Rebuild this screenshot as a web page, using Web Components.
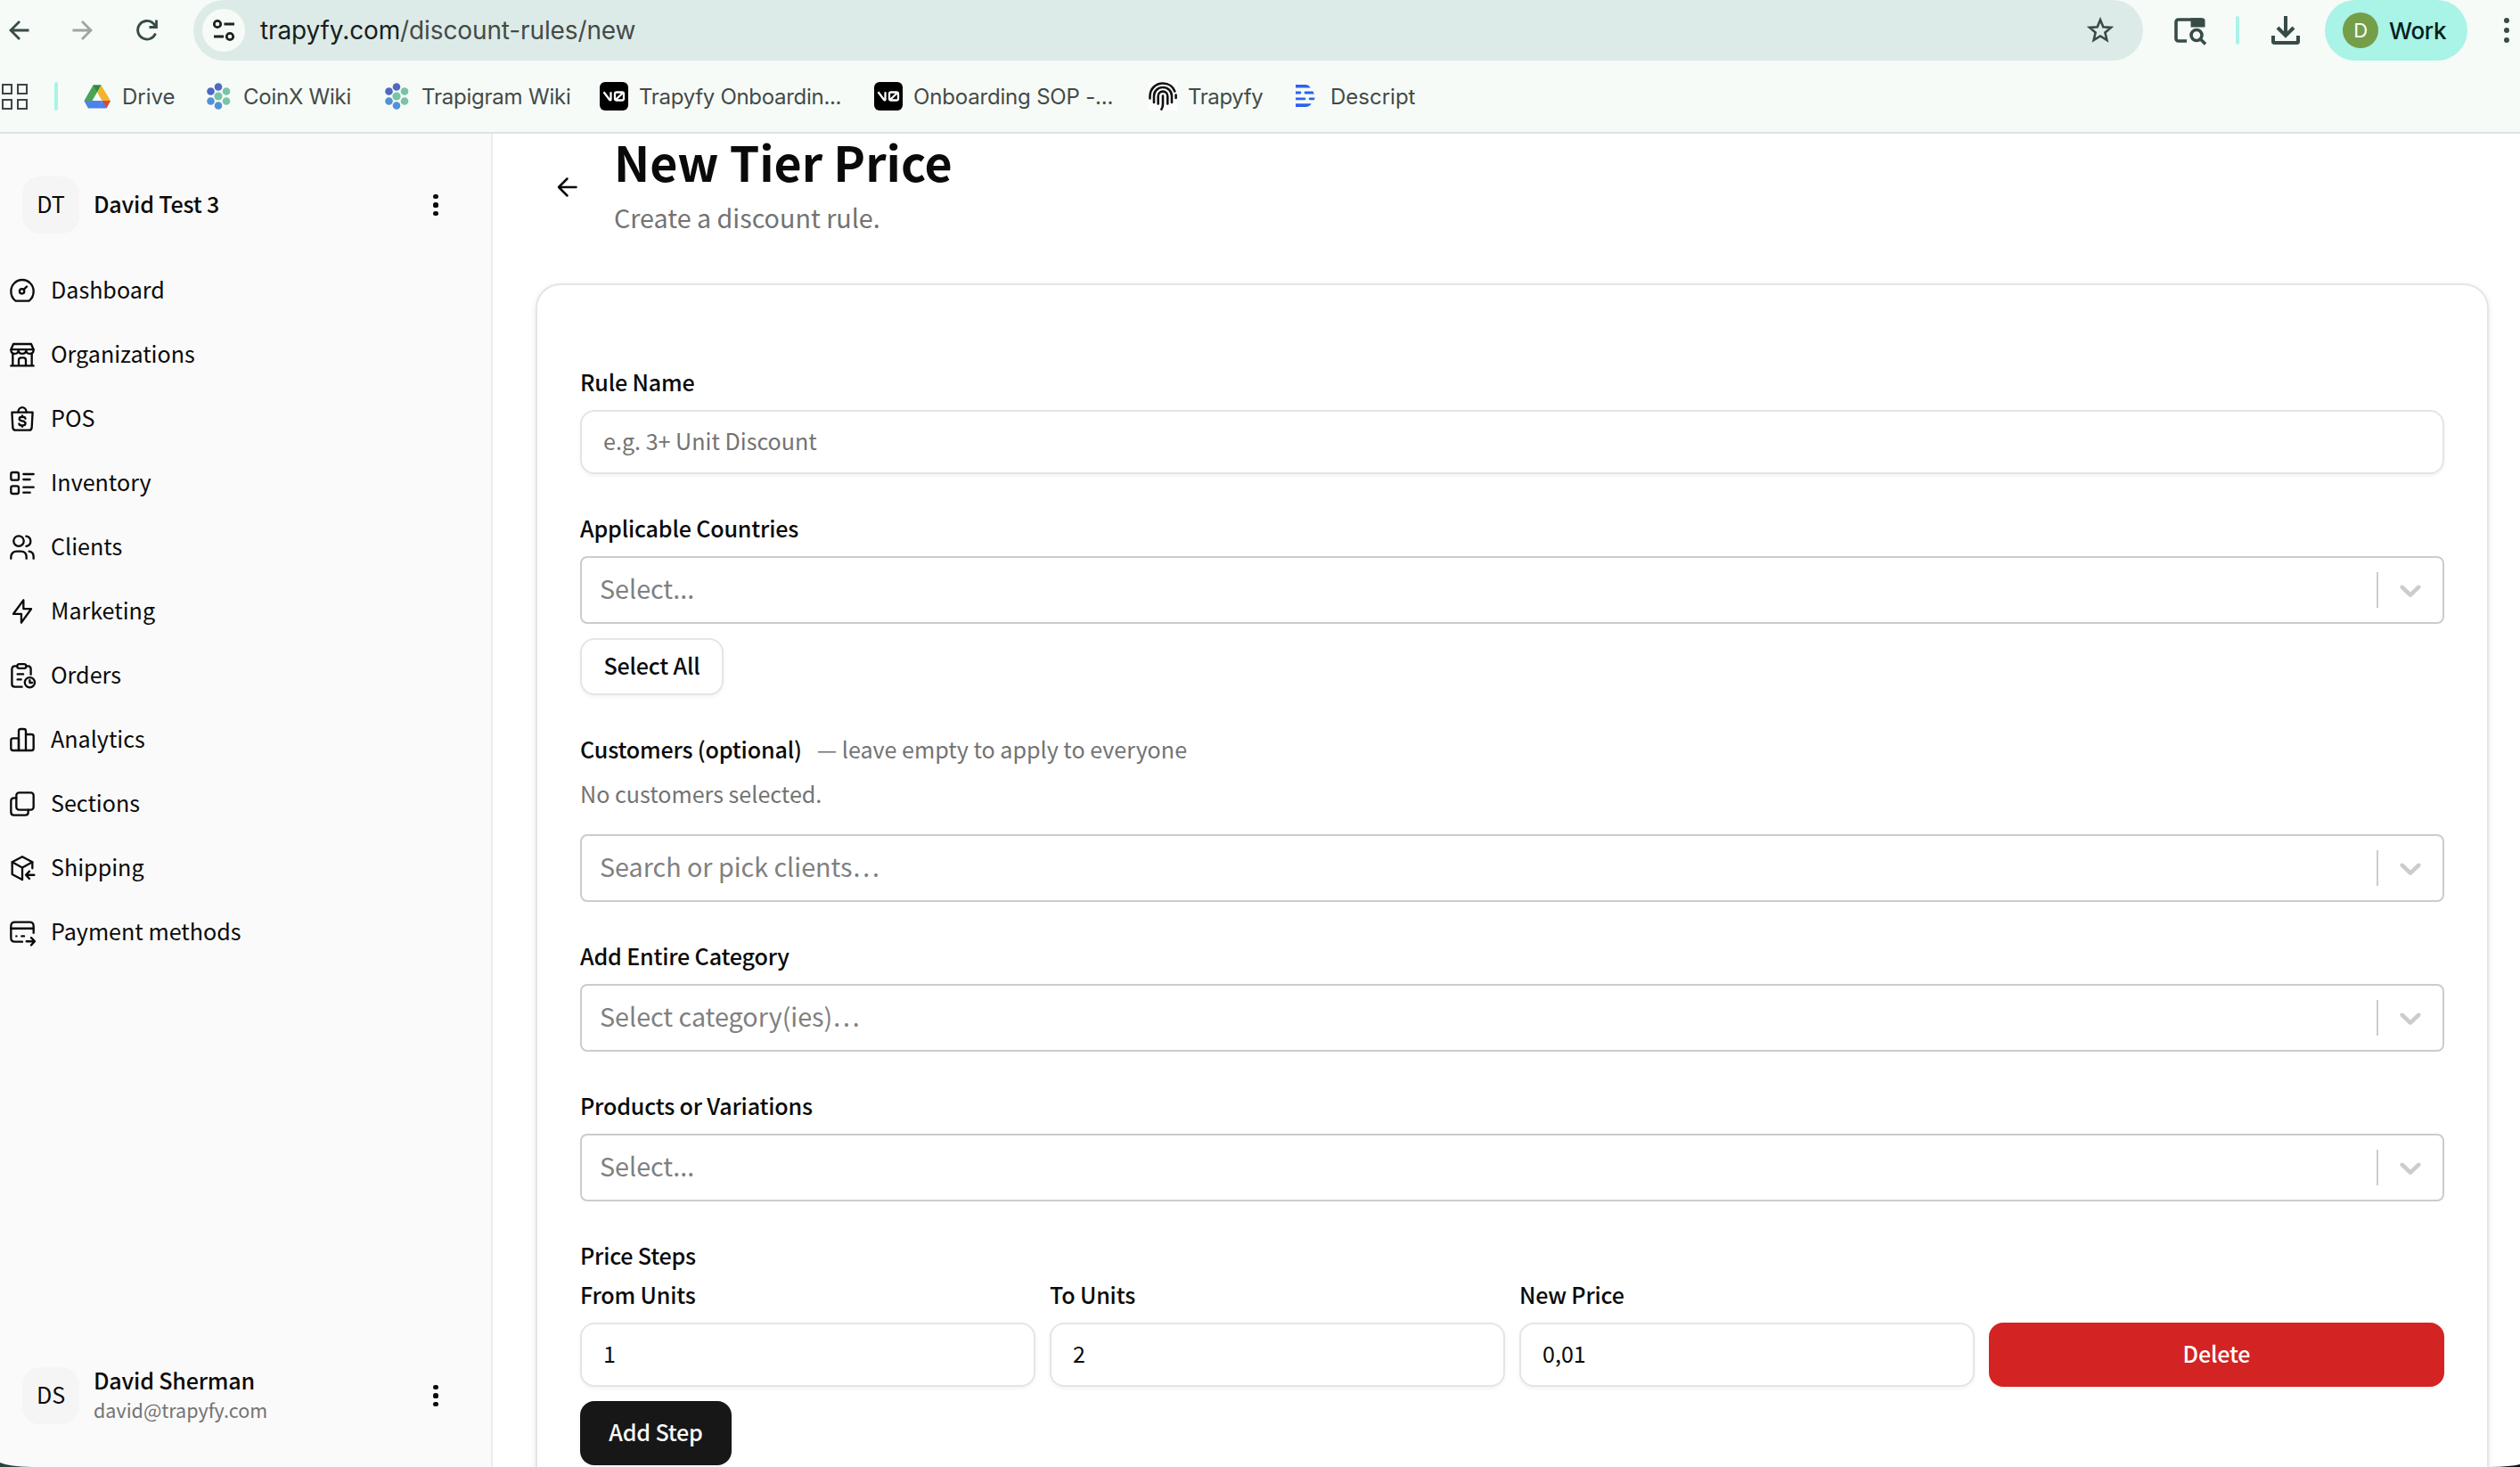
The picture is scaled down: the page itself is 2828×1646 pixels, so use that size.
<!DOCTYPE html>
<html lang="en">
<head>
<meta charset="utf-8">
<title>New Tier Price</title>
<style>
html,body{margin:0;padding:0;width:2828px;height:1646px;overflow:hidden;background:#fff}
body{font-family:"Noto Sans CJK SC","Noto Sans",sans-serif;font-size:25.1px;color:#0a0a0a}
</style>
</head>
<body>
<app-window></app-window>
<script>
const ICONS = {
  dashboard:'<path d="M17.6 20.700H6.400C4 18.900 2.500 15.800 2.500 12.500a9.500 9.500 0 0 1 19 0c0 3.300-1.500 6.400-3.900 8.200Z"/><circle cx="11.700" cy="12.600" r="2"/><path d="M13.200 11.200l2.600-2.600"/>',
  store:'<path d="M4 11v10M20 11v10M2.500 21.300h19"/><path d="M4.500 3h15l2 4.700c0 2.400-1.400 3.500-3 3.500-1.800 0-3-1.200-3.200-2.700-.3 1.500-1.600 2.700-3.300 2.700s-3-1.200-3.300-2.700C8.500 10 7.300 11.200 5.500 11.200c-1.600 0-3-1.100-3-3.500L4.500 3Z"/><path d="M2.700 7.600h18.600"/><path d="M9 21v-4.500c0-1.300.7-2 2-2h2c1.300 0 2 .7 2 2V21"/>',
  pos:'<path d="M3.300 6.500h17.400l-.7 12.700c-.1 1.500-1 2.300-2.400 2.300H6.400C5 21.500 4.100 20.700 4 19.200L3.300 6.500Z"/><path d="M8.500 6.200c.2-2.300 1.700-3.900 3.500-3.900s3.300 1.600 3.500 3.900"/><path d="M14.600 11.800c-.1-1-1-1.500-2.500-1.500-1.600 0-2.600.6-2.600 1.700 0 2.700 5.200 1 5.200 3.800 0 1.200-1.100 1.800-2.700 1.800s-2.600-.6-2.700-1.600M12 9.400v.9M12 17.600v.9"/>',
  inventory:'<rect x="2.500" y="3" width="6.500" height="6.500" rx="1.500"/><rect x="2.500" y="14.500" width="6.500" height="6.500" rx="1.500"/><path d="M13 4.500h8.500M13 9h5.500M13 15.500h8.500M13 20h5.500"/>',
  users:'<circle cx="9" cy="6.800" r="4.300"/><path d="M15.300 2.700c2.300.4 3.700 2.100 3.700 4.200s-1.400 3.800-3.700 4.200"/><path d="M2.500 21.500v-1.200c0-3 1.900-4.800 4.800-4.800h3.400c2.900 0 4.800 1.800 4.800 4.800v1.200"/><path d="M17.700 15.500c2.400.3 3.800 2 3.800 4.600v1.400"/>',
  bolt:'<path d="M13 2.500v7.400h6.500L11.200 21.500v-7.400H4.500L13 2.500Z"/>',
  orders:'<path d="M7.500 4H5.700C4.200 4 3.300 4.900 3.300 6.500v12.600c0 1.600.9 2.400 2.400 2.400h6"/><path d="M15.500 4h1.300c1.600 0 2.400.9 2.400 2.500V11"/><rect x="7.700" y="2.300" width="7.600" height="3.600" rx="1.800"/><path d="M8 10.800h4.800M8 15.300h3"/><circle cx="18.300" cy="17.800" r="4.200"/><path d="M18.300 15.800v2.200h2"/>',
  analytics:'<path d="M2.500 12.500c0-1.100.6-1.700 1.700-1.700H9V21H4.200c-1.100 0-1.700-.6-1.700-1.700v-6.800Z"/><path d="M9 21V4.700C9 3.600 9.600 3 10.700 3h2.600C14.400 3 15 3.600 15 4.700V21H9Z"/><path d="M15 7.500h4.800c1.100 0 1.700.6 1.700 1.700v10.100c0 1.100-.6 1.700-1.700 1.700H15"/>',
  sections:'<rect x="7" y="2.500" width="14.500" height="14.500" rx="2.300"/><path d="M7 7H5C3.400 7 2.500 7.900 2.500 9.500V19c0 1.600.9 2.500 2.500 2.500h9.500c1.600 0 2.500-.9 2.500-2.500v-2"/>',
  shipping:'<path d="M12 21.700l-8.500-4.500V7L12 2.400 20.500 7v5.200"/><path d="M3.500 7L12 11.600 20.500 7M12 11.600v10.100"/><path d="M22 17.800h-6.800M18 14.700l-3 3.100 3 3.100"/>',
  payment:'<path d="M21.500 12.500V6.800c0-2-1.200-3.300-3.300-3.300H5.800c-2.100 0-3.300 1.300-3.300 3.300v9.900c0 2 1.200 3.300 3.300 3.300H12"/><path d="M2.500 8.800h19M7 15.300h.1M11.500 15.300h2"/><path d="M15.500 19.700h6.800M19.500 16.600l3 3.100-3 3.100"/>'
};
const BROWSER_ICONS = {
  back:'<path d="M23.500 12H3M13 2L3 12l10 10"/>',
  forward:'<path d="M.5 12H21M11 2l10 10-10 10"/>',
  reload:'<path d="M21.500 15.500A10.300 10.300 0 1 1 19 4.300L22.500 8"/><path d="M22.500 0.500V8.500H14.500"/>'
};
function component(name, markup, init){
  const t=document.createElement('template');
  t.innerHTML='<style>*{box-sizing:border-box}</style>'+markup;
  customElements.define(name,class extends HTMLElement{
    constructor(){super();this.attachShadow({mode:'open'}).append(t.content.cloneNode(true));}
    connectedCallback(){if(init)init(this,this.shadowRoot);}
  });
}

component('line-icon',`<style>:host{display:block;width:32px;height:32px;flex:none}svg{display:block}</style>
<svg width="32" height="32" viewBox="0 0 24 24" fill="none" stroke="currentColor" stroke-width="1.750" stroke-linecap="round" stroke-linejoin="round"></svg>`,
(el,r)=>{r.querySelector('svg').innerHTML=ICONS[el.getAttribute('name')];});

component('kebab-dots',`<style>:host{display:flex;flex-direction:column;align-items:center;gap:4.300px;flex:none;width:8px}i{width:var(--dot,5.200px);height:var(--dot,5.200px);border-radius:50%;background:currentColor}</style><i></i><i></i><i></i>`);

component('nav-arrow',`<style>:host{display:block;width:24px;height:24px;flex:none}svg{display:block;overflow:visible}</style>
<svg width="24" height="24" viewBox="0 0 24 24" fill="none" stroke="currentColor" stroke-width="2.800"></svg>`,
(el,r)=>{r.querySelector('svg').innerHTML=BROWSER_ICONS[el.getAttribute('name')];});

component('address-bar',`<style>
:host{display:flex;align-items:center;width:2188px;height:68px;border-radius:34px;background:#ddebe8;padding:0 32px 0 10px;flex:none}
.site{width:48px;height:48px;border-radius:50%;background:#f6fbf7;display:grid;place-items:center}
.url{flex:1;margin-left:17px;font-size:28px;letter-spacing:-.12px;color:#444a48;white-space:nowrap;line-height:40px}
b{font-weight:400;color:#17201e}
svg{display:block}
</style>
<div class="site"><svg width="26" height="26" viewBox="0 0 26 26" fill="none" stroke="#1b2422" stroke-width="2.800"><circle cx="6" cy="6" r="3.700"/><path d="M13.500 6H25M2 20h11"/><circle cx="20" cy="20" r="3.700"/></svg></div>
<div class="url"><b>trapyfy.com</b>/discount-rules/new</div>
<svg width="32" height="32" viewBox="0 0 32 32" fill="none" stroke="#3e4744" stroke-width="2.600"><path d="M16 4.200l3.300 8 8.700.7-6.600 5.600 2 8.500L16 22.500 8.600 27l2-8.500L4 12.900l8.700-.7z"/></svg>`);

component('profile-chip',`<style>
:host{display:flex;align-items:center;width:160px;height:68px;border-radius:34px;background:#a9f3e7;padding-left:20px;flex:none;color:#05201c;font-size:26px;font-weight:500;letter-spacing:-.35px}
i{font-style:normal;font-weight:400;font-size:22px;color:#fff;width:40px;height:40px;border-radius:50%;background:#759e48;display:grid;place-items:center;margin-right:12px}
</style><i>D</i><slot></slot>`);

component('browser-toolbar',`<style>
:host{display:flex;align-items:center;height:68px;color:#374b47;font-family:Inter,"Liberation Sans",sans-serif}
.nav{display:flex;width:217px;padding-left:9px;gap:48px}
.fwd{color:#9da5a2}
.acts{display:flex;align-items:center}
svg{display:block;overflow:visible}
.bar{width:4px;height:32px;border-radius:2px;background:#a9f3e7;margin:0 36px 0 34px}
kebab-dots{margin-left:40px;gap:5px;--dot:6px}
profile-chip{margin-left:28px}
</style>
<div class="nav"><nav-arrow name="back"></nav-arrow><nav-arrow class="fwd" name="forward"></nav-arrow><nav-arrow name="reload"></nav-arrow></div>
<address-bar></address-bar>
<div class="acts">
<svg style="margin-left:34px" width="36" height="32" viewBox="0 0 36 32" fill="none" stroke="currentColor" stroke-width="3.600"><path d="M15 28H5.500a2.500 2.500 0 0 1-2.500-2.500v-19A2.500 2.500 0 0 1 5.500 4H32"/><path d="M19.500 2.200H32.500a3 3 0 0 1 3 3V12.500h-16z" fill="currentColor" stroke="none"/><circle cx="26" cy="21.500" r="6"/><path d="M30 25.500l6 6"/></svg>
<div class="bar"></div>
<svg width="32" height="32" viewBox="0 0 32 32" fill="none" stroke="currentColor" stroke-width="4"><path d="M16 0v22M7 13l9 9 9-9"/><path d="M2 22v6.500c0 1 .5 1.500 1.500 1.500h25c1 0 1.500-.5 1.500-1.500V22"/></svg>
<profile-chip>Work</profile-chip>
<kebab-dots></kebab-dots>
</div>`);

const FAV={
 drive:'<path d="M11.500 3.500h9L10.500 21 6 29 1.500 21z" fill="#4ca354"/><path d="M11.500 3.500h9l-4.500 8z" fill="#2f8a43"/><path d="M20.500 3.500L31 21h-9.500L16 11.500z" fill="#f3b32f"/><path d="M1.500 21h20l-4 8.500H6z" fill="#4c82ee"/><path d="M21.500 21H31l-4.500 8.500H17z" fill="#4c82ee"/><path d="M22 21h9l-4.500 8z" fill="#dd4a33"/>',
 wiki:'<g><circle cx="16" cy="5.500" r="4.300" fill="#5068c4"/><circle cx="7.500" cy="10.500" r="4.300" fill="#5068c4"/><circle cx="25" cy="10.500" r="4.300" fill="#79c4a4"/><circle cx="16" cy="16" r="4.600" fill="#79c4a4"/><circle cx="7.500" cy="21.500" r="4.300" fill="#5390d8"/><circle cx="25" cy="21.500" r="4.300" fill="#79c4a4"/><circle cx="16" cy="26.500" r="4.300" fill="#5390d8"/></g>',
 v0:'<rect width="32" height="32" rx="6"/><g fill="none" stroke="#fff" stroke-width="2.300"><path d="M4.500 11.200l6.600 8.800c.6.700 1.400.4 1.400-.5V11.200"/><path d="M17 18.500V13.500c0-1.300.8-2 2-2h6c1.300 0 2 .7 2 2v5c0 1.300-.7 2-2 2h-6c-1.200 0-2-.7-2-2zM17.800 20l8.400-8"/></g>',
 finger:'<rect width="32" height="32" fill="#fff"/><g fill="none" stroke="#111" stroke-width="2.600" stroke-linecap="round"><path d="M1.500 18.500V15.500C1.800 7.500 8 1.500 16 1.500c6.500 0 11.500 3.700 13.400 9"/><path d="M30.600 14.500v3.500"/><path d="M6 23V15.500C6 10 10.500 6 16 6s10 4 10 9.500V23"/><path d="M10.700 24.500V16c0-3.300 2.300-5.400 5.300-5.400s5.300 2.100 5.300 5.400v8.500"/><path d="M16 15.500V25c0 2.300-.6 4-1.600 5.600"/></g>',
 descript:'<g fill="#2b62f0"><path d="M5 3h11c2.500 0 4.300 1.200 5.700 3.400H5zM5 24.300h17.700C21 26.800 19 28 16 28H5zM5 10.600h5.500l1 1.400-1 1.400H5zM15.500 10.600H24.500l1.300 2.800H15.500l-1.200-1.400zM5 17.400h10.500l1 1.400-1 1.400H5zM20.500 17.400h6l-.6 2.800h-5.400l-1-1.400z"/></g>'
};
component('bookmark-item',`<style>
:host{display:flex;align-items:center;gap:12px;flex:none;height:32px;white-space:nowrap;font-size:24px;letter-spacing:var(--ls,0);color:#444a48;width:var(--w)}
svg{display:block;flex:none}</style><svg width="32" height="32" viewBox="0 0 32 32"></svg><span><slot></slot></span>`,
(el,r)=>{r.querySelector('svg').innerHTML=FAV[el.getAttribute('icon')];});

component('bookmarks-bar',`<style>
:host{display:flex;align-items:center;height:82px;border-bottom:2px solid #dbe5e1;font-family:Inter,"Liberation Sans",sans-serif}
.apps{display:grid;grid-template-columns:12px 12px;gap:5px;margin-left:2px}
.apps i{height:12px;border:2.800px solid #3c4644}
.bar{width:4px;height:32px;border-radius:2px;background:#a9f3e7;margin:0 28px 0 30px}
</style>
<div class="apps"><i></i><i></i><i></i><i></i></div><div class="bar"></div>
<bookmark-item icon="drive" style="--w:136px">Drive</bookmark-item>
<bookmark-item icon="wiki" style="--w:200px;--ls:-.25px">CoinX Wiki</bookmark-item>
<bookmark-item icon="wiki" style="--w:244px;--ls:-.22px">Trapigram Wiki</bookmark-item>
<bookmark-item icon="v0" style="--w:308px;--ls:-.3px">Trapyfy Onboardin...</bookmark-item>
<bookmark-item icon="v0" style="--w:308px;--ls:-.18px">Onboarding SOP -...</bookmark-item>
<bookmark-item icon="finger" style="--w:160px;--ls:-.4px">Trapyfy</bookmark-item>
<bookmark-item icon="descript" style="--w:160px">Descript</bookmark-item>`);

component('account-row',`<style>
:host{display:flex;align-items:center;height:64px;padding:0 58px 0 25px}
.av{width:64px;height:64px;border-radius:20px;background:#f5f5f5;display:grid;place-items:center;padding-bottom:4px;margin-right:16px}
.who{flex:1;display:flex;flex-direction:column;font-weight:500;letter-spacing:-.18px;line-height:36px;padding-bottom:4px}
::slotted([slot=mail]){font-weight:400;letter-spacing:0;font-size:21.500px;color:#737373;line-height:32px}
</style><div class="av"><slot name="initials"></slot></div><div class="who"><slot></slot><slot name="mail"></slot></div><kebab-dots></kebab-dots>`);

component('nav-item',`<style>
:host{display:flex;align-items:center;height:72px;padding-left:9px;gap:16px}
span{padding-bottom:4px;line-height:36px;white-space:nowrap}</style><line-icon></line-icon><span><slot></slot></span>`,
(el,r)=>{const i=document.createElement('line-icon');i.setAttribute('name',el.getAttribute('icon'));r.querySelector('line-icon').replaceWith(i);});

component('side-bar',`<style>
:host{display:flex;flex-direction:column;width:553px;flex:none;background:#fafafa;border-right:2px solid #ececec;padding:48px 0}
nav{flex:1;padding-top:28px}</style>
<account-row><span slot="initials">DT</span><span>David Test 3</span></account-row>
<nav>
<nav-item icon="dashboard">Dashboard</nav-item><nav-item icon="store">Organizations</nav-item><nav-item icon="pos">POS</nav-item><nav-item icon="inventory">Inventory</nav-item><nav-item icon="users">Clients</nav-item><nav-item icon="bolt">Marketing</nav-item><nav-item icon="orders">Orders</nav-item><nav-item icon="analytics">Analytics</nav-item><nav-item icon="sections">Sections</nav-item><nav-item icon="shipping">Shipping</nav-item><nav-item icon="payment">Payment methods</nav-item>
</nav>
<account-row><span slot="initials">DS</span><span>David Sherman</span><span slot="mail">david@trapyfy.com</span></account-row>`);

component('page-header',`<style>
:host{display:flex;align-items:flex-start;height:168px;padding-left:72px}
svg{display:block;margin:48px 40px 0 0;flex:none}
h1{margin:-5px 0 0;font-size:53.700px;line-height:72px;font-weight:700;white-space:nowrap}
p{margin:7px 0 0;font-size:28.700px;line-height:40px;color:#737373}
</style><svg width="24" height="24" viewBox="0 0 24 24" fill="none" stroke="currentColor" stroke-width="2.500" stroke-linecap="round" stroke-linejoin="round"><path d="M21.500 12H2M11.500 2.500L2 12l9.500 9.500"/></svg>
<div><h1>New Tier Price</h1><p>Create a discount rule.</p></div>`);

component('text-input',`<style>
:host{display:flex;align-items:center;height:72px;border:2px solid #e5e5e5;border-radius:16px;padding:0 24px 4px;background:#fff;box-shadow:0 2px 4px rgba(0,0,0,.05)}
:host([placeholder]){color:#737373}</style><slot></slot>`);

component('select-box',`<style>
:host{display:flex;align-items:center;height:76px;border:2px solid #ccc;border-radius:8px;padding-left:20px;background:#fff;color:#808080;font-size:28.700px}
span{flex:1;padding-bottom:4px;line-height:40px}
i{width:2px;height:40px;background:#ccc}
svg{display:block;margin:0 16px;fill:#ccc}</style><span><slot></slot></span><i></i>
<svg width="40" height="40" viewBox="0 0 20 20"><path d="M4.516 7.548c0.436-0.446 1.043-0.481 1.576 0l3.908 3.747 3.908-3.747c0.533-0.481 1.141-0.446 1.574 0 0.436 0.445 0.408 1.197 0 1.615-0.406 0.418-4.695 4.502-4.695 4.502-0.217 0.223-0.502 0.335-0.787 0.335s-0.570-0.112-0.789-0.335c0 0-4.287-4.084-4.695-4.502s-0.436-1.170 0-1.615z"/></svg>`);

component('push-button',`<style>
:host{display:flex;align-items:center;justify-content:center;height:72px;border-radius:16px;padding-bottom:4px;font-weight:500;letter-spacing:-.18px;background:#171717;color:#fafafa;box-shadow:0 2px 4px rgba(0,0,0,.05)}
:host([kind=outline]){height:64px;border:2px solid #e5e5e5;background:#fff;color:#0a0a0a}
:host([kind=danger]){background:#d32322;color:#fff}</style><slot></slot>`);

component('form-field',`<style>
:host{display:flex;flex-direction:column}
.l{height:28px;line-height:28px;font-weight:500;letter-spacing:-.18px;margin-bottom:18px;white-space:nowrap}
</style><div class="l"><slot name="label"></slot></div><slot></slot>`);

component('rule-form',`<style>
:host{display:flex;flex-direction:column;gap:46px;margin:0 35px 0 48px;height:1400px;padding:94px 48px 0;border:2px solid #e5e5e5;border-radius:28px;background:#fff;box-shadow:0 2px 6px rgba(0,0,0,.1)}
.all{width:161px;margin-top:16px}
.hint{font-weight:400;letter-spacing:0;color:#737373;margin-left:17px}
.none{color:#737373;line-height:28px;margin:4px 0 32px}
.steps{display:grid;grid-template-columns:repeat(4,1fr);gap:16px;align-items:end}
.sec{height:28px;line-height:28px;font-weight:500;letter-spacing:-.18px;margin-bottom:16px}
.add{width:170px;margin-top:16px}
</style>
<form-field><span slot="label">Rule Name</span><text-input placeholder>e.g. 3+ Unit Discount</text-input></form-field>
<form-field><span slot="label">Applicable Countries</span><select-box>Select...</select-box><push-button class="all" kind="outline">Select All</push-button></form-field>
<form-field><span slot="label">Customers (optional)<span class="hint">— leave empty to apply to everyone</span></span><div class="none">No customers selected.</div><select-box>Search or pick clients…</select-box></form-field>
<form-field><span slot="label">Add Entire Category</span><select-box>Select category(ies)…</select-box></form-field>
<form-field><span slot="label">Products or Variations</span><select-box>Select...</select-box></form-field>
<section><div class="sec">Price Steps</div>
<div class="steps"><form-field><span slot="label">From Units</span><text-input>1</text-input></form-field><form-field><span slot="label">To Units</span><text-input>2</text-input></form-field><form-field><span slot="label">New Price</span><text-input>0,01</text-input></form-field><push-button kind="danger">Delete</push-button></div>
<push-button class="add">Add Step</push-button></section>`);

component('app-window',`<style>
:host{display:flex;flex-direction:column;width:2828px;height:1646px;overflow:hidden;position:relative;background:#f6fbf7}
.body{flex:1;display:flex;min-height:0;background:#fff}
main{flex:1;min-width:0}
.corner{position:absolute;bottom:0;display:block}
</style>
<browser-toolbar></browser-toolbar><bookmarks-bar></bookmarks-bar>
<div class="body"><side-bar></side-bar><main><page-header></page-header><rule-form></rule-form></main></div>
<svg class="corner" style="left:0" width="36" height="5"><path d="M0 0Q10 4.500 36 5H0z" fill="#2c423c"/></svg>
<svg class="corner" style="right:0" width="34" height="3"><path d="M34 0Q24 2.500 0 3H34z" fill="#111"/></svg>`);
</script>
</body>
</html>
